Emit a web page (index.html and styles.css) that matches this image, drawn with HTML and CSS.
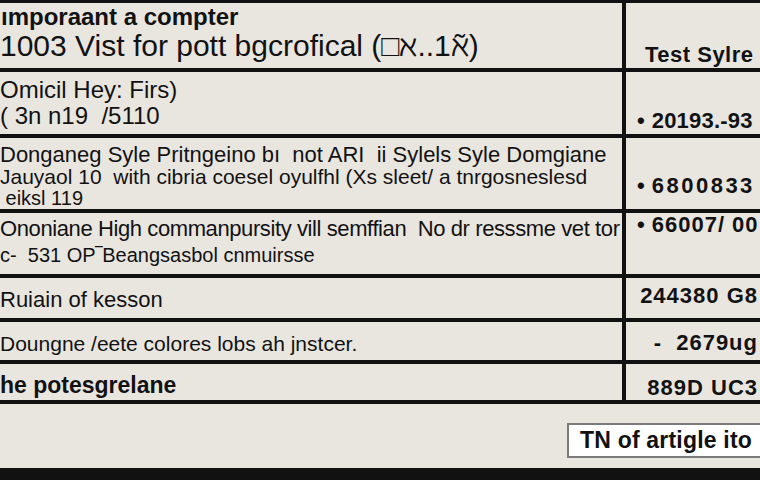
FILE: index.html
```html
<!DOCTYPE html>
<html>
<head>
<meta charset="utf-8">
<link rel="stylesheet" href="styles.css">
</head>
<body>
<div class="sheet">
  <div class="table">
    <div class="cell left r1">
      <div class="t-bold h1a">ımporaant a compter</div>
      <div class="h1b">1003 Vist for pott bgcrofical (□ℵ..1ℵ̃)</div>
    </div>
    <div class="cell right r1">
      <div class="t-bold label">Test Sylre</div>
    </div>

    <div class="cell left r2">
      <div class="r2a">Omicil Hey: Firs)</div>
      <div class="r2a">( 3n n19 &nbsp;/5110</div>
    </div>
    <div class="cell right r2">
      <div class="val v2"><span class="dot">•</span>20193.-93</div>
    </div>

    <div class="cell left r3">
      <div class="r3a">Donganeg Syle Pritngeino bı &nbsp;not ARI &nbsp;ii Sylels Syle Domgiane</div>
      <div class="r3b">Jauyaol 10 &nbsp;with cibria coesel oyulfhl (Xs sleet/ a tnrgosneslesd</div>
      <div class="r3c">&nbsp;eiksl 119</div>
    </div>
    <div class="cell right r3">
      <div class="val v3"><span class="dot">•</span>6800833</div>
    </div>

    <div class="cell left r4">
      <div class="r4a">Ononiane High commanpursity vill semffian &nbsp;No dr resssme vet tor</div>
      <div class="r4b">c- &nbsp;531 OP‾Beangsasbol cnmuirsse</div>
    </div>
    <div class="cell right r4">
      <div class="val v4"><span class="dot">•</span>66007/ 00</div>
    </div>

    <div class="cell left r5">
      <div class="r5a">Ruiain of kesson</div>
    </div>
    <div class="cell right r5 ralign">
      <div class="val">244380 G8</div>
    </div>

    <div class="cell left r6">
      <div class="r6a">Doungne /eete colores lobs ah jnstcer.</div>
    </div>
    <div class="cell right r6 ralign">
      <div class="val">- &nbsp;2679ug</div>
    </div>

    <div class="cell left r7">
      <div class="t-bold r7a">he potesgrelane</div>
    </div>
    <div class="cell right r7 ralign">
      <div class="val">889D UC3</div>
    </div>
  </div>
  <div class="footer">
    <button class="btn">TN of artigle ito</button>
  </div>
  <div class="bottombar"></div>
</div>
</body>
</html>
```
FILE: styles.css
```css
* { box-sizing: border-box; }
html, body {
  margin: 0;
  padding: 0;
  width: 760px;
  height: 480px;
  overflow: hidden;
  background: #e9e6e0;
}
.sheet {
  width: 760px;
  height: 480px;
  display: flex;
  flex-direction: column;
  font-family: "Liberation Sans", Arial, sans-serif;
  color: #121212;
  border-top: 3px solid #111;
}
.table {
  display: grid;
  grid-template-columns: 622px 1fr;
  grid-template-rows: 69px 66px 75px 65px 44px 42px 36px;
  border-bottom: 4px solid #111;
}
.cell {
  border-bottom: 4px solid #111;
  overflow: hidden;
  white-space: nowrap;
  display: flex;
  flex-direction: column;
  justify-content: flex-start;
}
.cell.r7 { border-bottom: none; }
.right {
  border-left: 4px solid #111;
  padding-left: 11px;
}
.right.ralign { align-items: flex-end; padding-right: 2px; }
.t-bold { font-weight: bold; }

/* left column rows */
.h1a { font-size: 24px; line-height: 27px; margin-left: 1px; }
.h1b { font-size: 30px; line-height: 31px; }
.r2.left { padding-top: 5px; }
.r2a { font-size: 24px; line-height: 26px; }
.r3.left { padding-top: 5px; }
.r3a { font-size: 22px; line-height: 23px; }
.r3b { font-size: 21px; line-height: 22px; }
.r3c { font-size: 20px; line-height: 20px; }
.r4.left { padding-top: 3px; }
.r4a { font-size: 22px; line-height: 25px; letter-spacing: -0.4px; }
.r4b { font-size: 20px; line-height: 25px; margin-top: 2px; }
.r5.left { padding-top: 10px; }
.r5a { font-size: 22px; line-height: 24px; }
.r6.left { padding-top: 10px; }
.r6a { font-size: 21px; line-height: 24px; }
.r7.left { padding-top: 9px; }
.r7a { font-size: 23px; line-height: 24px; }

/* right column */
.label { font-size: 22px; line-height: 24px; margin-left: 8px; letter-spacing: 0.5px; }
.r1.right { padding-top: 40px; }
.r2.right { padding-top: 38px; }
.r3.right { padding-top: 37px; }
.r4.right { padding-top: 1px; }
.r5.right { padding-top: 7px; }
.r6.right { padding-top: 10px; }
.r7.right { padding-top: 13px; }
.val {
  display: flex;
  align-items: center;
  font-weight: bold;
  font-size: 22px;
  line-height: 22px;
  letter-spacing: 1px;
}
.v2 { letter-spacing: 0.2px; }
.v3 { letter-spacing: 2.5px; }
.dot { font-size: 22px; margin-right: 7px; letter-spacing: 0; }

.footer {
  flex: 1;
  display: flex;
  justify-content: flex-end;
  align-items: flex-start;
  padding-top: 19px;
}
.btn {
  font-family: "Liberation Sans", Arial, sans-serif;
  font-weight: bold;
  font-size: 23px;
  letter-spacing: 0.2px;
  color: #111;
  background: #fff;
  border: 2px solid #7a7a7a;
  border-right: none;
  height: 35px;
  width: 193px;
  padding: 0 0 0 11px;
  text-align: left;
  margin: 0;
}
.bottombar {
  height: 12px;
  background: #111;
}
```
